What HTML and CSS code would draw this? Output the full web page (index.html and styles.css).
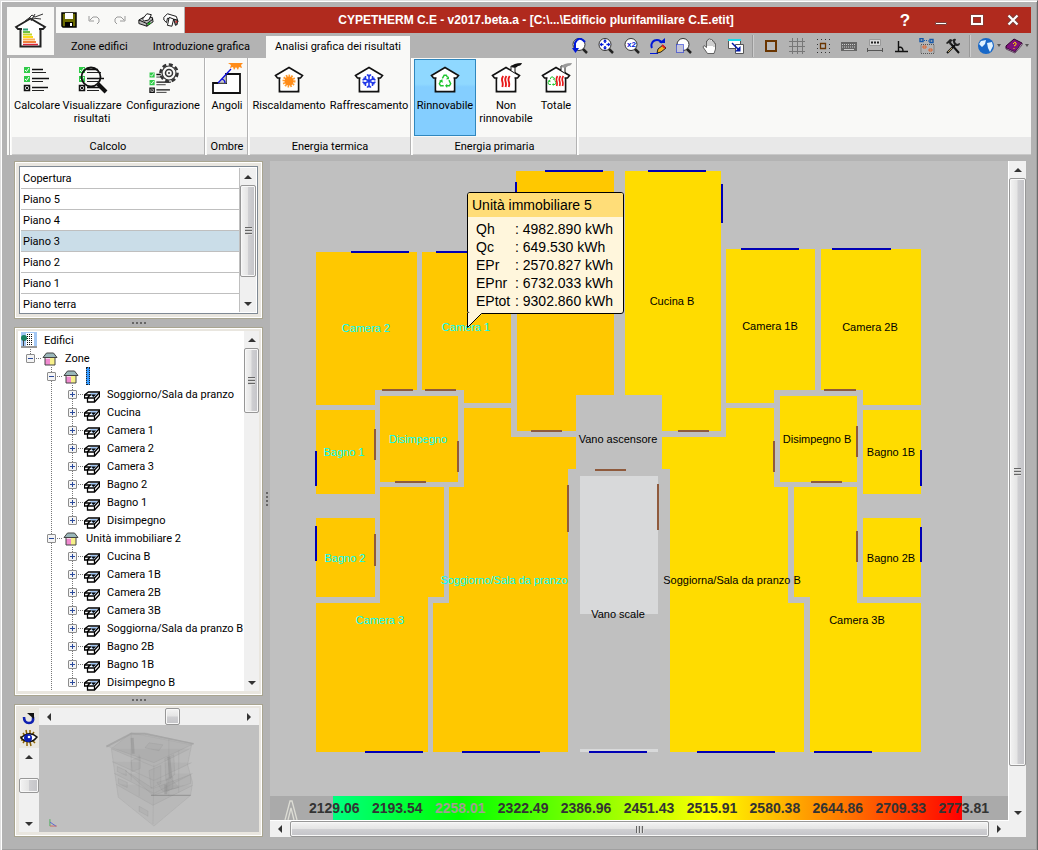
FILE: index.html
```
<!DOCTYPE html>
<html lang="it">
<head>
<meta charset="UTF-8">
<meta name="viewport" content="width=device-width, initial-scale=1.0">
<title>CYPETHERM C.E</title>
<link rel="stylesheet" href="styles.css">
</head>
<body>
<!-- shared icons -->
<svg class="defs" width="0" height="0" aria-hidden="true">
  <symbol id="i-zone" viewBox="0 0 16 16">
    <path d="M3 6h5v9H3z" fill="#f08ad0"/><path d="M3 6h5v3H3z" fill="#fbd3ec"/><path d="M8 6h5v9H8z" fill="#f7f08a"/>
    <path d="M3 15V7M13 15V7M3 15h10" stroke="#444" fill="none"/>
    <path d="M1 7.500 4.500 3h7L15 7.500z" fill="#9bb8ba" stroke="#444"/>
  </symbol>
  <symbol id="i-room" viewBox="0 0 16 12">
    <path d="M4.500 1h11v4.500l-5 5.500h-7V7h-3V4z" fill="#fff" stroke="#000" stroke-width="1.300"/>
    <path d="M6 2h8l-4 4H8z" fill="#a4c8f4"/>
    <path d="M7 3.500h5L9.500 6z" fill="#000"/>
    <path d="M1 4h6M3.500 7h7v4M10.500 7l5-5.500M3 7l4-3.500" stroke="#000" stroke-width="1.300" fill="none"/>
  </symbol>
  <symbol id="i-house" viewBox="0 0 32 32">
    <path d="M6.500 13v15.500h19V13" fill="#fff" stroke="#111" stroke-width="1.800"/>
    <path d="M2.500 12.500 16 4.500l13.500 8-2 2.500h-23z" fill="#fff" stroke="#111" stroke-width="1.600"/>
    <path d="M7.500 12.500h17v15h-17z" fill="#fff"/>
  </symbol>
  <symbol id="i-recycle" viewBox="0 0 16 16">
    <path d="M5 5l2-3.500h2.500L11 4M12.500 7l2 4-1.500 2.500H9.500M6.500 13.500H3L1.500 11 3.500 7.500" fill="none" stroke="#1fc52e" stroke-width="1.600"/>
    <path d="M12.500 2.500v3.500H9zM10.500 11v5L8 13.500zM1 8l4-2 .500 4z" fill="#1fc52e"/>
  </symbol>
  <symbol id="i-flames" viewBox="0 0 12 14">
    <path d="M3 1q-2 3-1 6t0 6M6.500 1q-2 3-1 6t0 6M10 1q-2 3-1 6t0 6" fill="none" stroke="#e81818" stroke-width="2"/>
  </symbol>
  <symbol id="i-list" viewBox="0 0 32 32">
    <path d="M3 4h6v6H3zM3 13h6v6H3z" fill="#2fcb48"/>
    <path d="M4 7l1.500 1.500L8 5M4 16l1.500 1.500L8 14" stroke="#fff" fill="none"/>
    <path d="M3.500 22.500h5v5h-5z" fill="#fff" stroke="#111" stroke-width="1.500"/>
    <path d="M4.500 23.500l3 3M7.500 23.500l-3 3" stroke="#111"/>
    <path d="M11 6.500h11M11 15.500h17M11 24.500h16" stroke="#111" stroke-width="1.600"/>
    <path d="M11 9.500h14M11 18.500h11M11 27.500h12" stroke="#222"/>
  </symbol>
  <symbol id="i-up" viewBox="0 0 8 8"><path d="M0 6 4 2l4 4z" fill="#333"/></symbol>
  <symbol id="i-down" viewBox="0 0 8 8"><path d="M0 2h8L4 6z" fill="#333"/></symbol>
  <symbol id="i-left" viewBox="0 0 8 8"><path d="M6 0v8L2 4z" fill="#333"/></symbol>
  <symbol id="i-right" viewBox="0 0 8 8"><path d="M2 0v8l4-4z" fill="#333"/></symbol>
  <symbol id="i-lens" viewBox="0 0 16 16">
    <path d="M10.500 10.500 15 15" stroke="#222" stroke-width="2.500"/>
    <circle cx="7" cy="6.500" r="6" fill="#fff" stroke="#333"/>
  </symbol>
</svg>

<div class="window">
  <header class="top">
    <button class="logo" aria-label="Menu">
      <svg width="34" height="36" viewBox="0 0 34 36">
        <path d="M6.500 15v18.500h20V15" fill="#fff" stroke="#222" stroke-width="2"/>
        <path d="M2 14 16.500 5.500 31 14l-2 2H4z" fill="#fff" stroke="#222" stroke-width="1.800"/>
        <path d="M8 14h17v18H8z" fill="#fff"/>
        <path d="M11 8l4-3 3-3 3 2 8-3M18 5l9 1M21 1l-4 7" stroke="#333" fill="none"/>
        <path d="M9 16.500h5" stroke="#2f9f7c" stroke-width="2"/><path d="M9 19h7" stroke="#6cc04a" stroke-width="2"/>
        <path d="M9 21.500h9" stroke="#c5d52b" stroke-width="2"/><path d="M9 24h10" stroke="#fbdc1a" stroke-width="2"/>
        <path d="M9 26.500h12" stroke="#f7b05a" stroke-width="2"/><path d="M9 29h13" stroke="#f0823c" stroke-width="2"/>
        <path d="M9 31.500h15" stroke="#d9263a" stroke-width="1.500"/>
      </svg>
    </button>
    <div class="top-rows">
      <div class="title-row">
        <div class="quick">
          <button aria-label="Salva"><svg width="16" height="16" viewBox="0 0 16 16"><path d="M1 1h14v14H2l-1-1z" fill="#6b6b00" stroke="#000" stroke-width="1.500"/><path d="M4 1h8v6H4z" fill="#fff"/><path d="M4 10h8v5H4z" fill="#000"/><path d="M9 11h2v3H9z" fill="#fff"/></svg></button>
          <button aria-label="Annulla"><svg width="14" height="12" viewBox="0 0 14 12"><path d="M3 6l3-3h4l2 2v3l-2 2M2 2v5h5" fill="none" stroke="#999"/></svg></button>
          <button aria-label="Ripeti"><svg width="14" height="12" viewBox="0 0 14 12"><path d="M11 6 8 3H4L2 5v3l2 2M12 2v5H7" fill="none" stroke="#999"/></svg></button>
          <button aria-label="Stampa"><svg width="16" height="16" viewBox="0 0 18 16"><path d="M1 8l5-3h10l1 5-7 5-9-3z" fill="#bbb" stroke="#000"/><path d="M5 7l5-6 5 1-3 6-5 1z" fill="#fff" stroke="#000"/><path d="M1 8l9 4v3M10 12l7-5" stroke="#000" fill="none"/><path d="M11 13l3-2" stroke="#1aa51a" stroke-width="2"/></svg></button>
          <button aria-label="Esporta"><svg width="16" height="16" viewBox="0 0 18 16"><path d="M1 5l4-4 10 3 2 6-2 1-2-3-8-2-1 5-3-3z" fill="#fff" stroke="#000"/><path d="M7 5l-2 9 5 1 2-8z" fill="#fff" stroke="#000"/><path d="M12 7l4 1v5l-2 1z" fill="#888" stroke="#000"/><path d="M14 10h2" stroke="#e03030" stroke-width="2"/></svg></button>
        </div>
        <h1>CYPETHERM C.E - v2017.beta.a - [C:\...\Edificio plurifamiliare C.E.etit]</h1>
        <div class="win-buttons">
          <button class="help" aria-label="Aiuto">?</button>
          <button aria-label="Riduci"><svg width="14" height="12"><path d="M1.500 8.500h11v2h-11z" fill="#fff" stroke="#7a3f3a"/></svg></button>
          <button aria-label="Ingrandisci"><svg width="14" height="12"><path d="M2 2h10v8H2z" fill="none" stroke="#7a3f3a" stroke-width="3.500"/><path d="M2 2h10v8H2z" fill="none" stroke="#fff" stroke-width="2"/></svg></button>
          <button aria-label="Chiudi"><svg width="14" height="12"><path d="M2.500 1.500l9 9M11.500 1.500l-9 9" stroke="#7a3f3a" stroke-width="4"/><path d="M2.500 1.500l9 9M11.500 1.500l-9 9" stroke="#fff" stroke-width="2.200"/></svg></button>
        </div>
      </div>
      <div class="tab-row">
        <nav class="tabs">
          <a href="#">Zone edifici</a>
          <a href="#">Introduzione grafica</a>
          <a href="#" class="active">Analisi grafica dei risultati</a>
        </nav>
        <div class="tools">
          <button aria-label="Vista precedente"><svg width="16" height="16"><use href="#i-lens"/><path d="M13 4Q7-3 3 5v6" fill="none" stroke="#0018d8" stroke-width="2"/><path d="M0 10h7l-3.500 5z" fill="#0018d8"/></svg></button>
          <button aria-label="Inquadra tutto"><svg width="16" height="16"><use href="#i-lens"/><path d="M7 2v3M7 8v3M2.500 6.500h3M8.500 6.500h3" stroke="#0018d8" stroke-width="1.500"/><path d="M7 1l2 2.500H5zM7 12l2-2.500H5zM1.500 6.500 4 4.500v4zM12.500 6.500 10 4.500v4z" fill="#0018d8"/></svg></button>
          <button aria-label="Zoom x2"><svg width="16" height="16"><use href="#i-lens"/><text x="3" y="9" class="x2">x2</text></svg></button>
          <button aria-label="Ridisegna"><svg width="16" height="16"><path d="M2 10a5.500 5.500 0 0 1 10-5" fill="none" stroke="#0018d8" stroke-width="2"/><path d="M9 5h6V0z" fill="#0018d8"/><path d="M0 15.500h8" stroke="#0018d8"/><path d="M7 15l1-4 5-4 3 3-5 4z" fill="#f5b41c" stroke="#222"/><path d="M12 7l3 3" stroke="#d22" stroke-width="2"/></svg></button>
          <button aria-label="Zoom finestra"><svg width="16" height="16"><use href="#i-lens"/><path d="M.500 6.500h7v8h-7z" fill="#c4c4d8" stroke="#0018d8" stroke-dasharray="1 1"/></svg></button>
          <button aria-label="Sposta"><svg width="16" height="16"><path d="M5.500 15.500 1 9l1-1.500 2.500 2V3L6 2.500V1.500L7.500 1 9 1.500l1.500.500v1L12 3.500V5l1.500.500V11L12 15.500z" fill="#fff" stroke="#444" stroke-width=".8"/><path d="M6 3v5M8 2v6M10 3v5M12 5v4" stroke="#777" stroke-width=".7"/></svg></button>
          <button aria-label="Finestre"><svg width="16" height="16"><path d="M.500 1.500h12v9H.500z" fill="#fff" stroke="#555"/><path d="M0 1h13v2H0z" fill="#15d8e8"/><path d="M7.500 6.500h8v9h-8z" fill="#fff" stroke="#555"/><path d="M4 5l7 7" stroke="#0018a8" stroke-width="1.500"/><path d="M12.500 8v5.500H7z" fill="#0018a8"/></svg></button>
          <span class="sep"></span>
          <button aria-label="Bordo"><svg width="16" height="16"><path d="M3 3h10v10H3z" fill="#b9b9b9" stroke="#6a3500" stroke-width="2"/></svg></button>
          <button aria-label="Griglia"><svg width="16" height="16"><path d="M3.500 0v16M8.500 0v16M13.500 0v16M0 3.500h16M0 8.500h16M0 13.500h16" stroke="#777"/></svg></button>
          <button aria-label="Punti"><svg width="16" height="16"><path d="M5.500 5.500h5v5h-5z" fill="none" stroke="#6a3500" stroke-width="1.300"/><path d="M2 1.500h13M2 14.500h13M2 6.500h1M2 10.500h1M14 6.500h1M14 10.500h1" stroke="#333" stroke-dasharray="1 3"/></svg></button>
          <button aria-label="Tastiera"><svg width="16" height="16"><path d="M0 4h16v9H0z" fill="#666"/><path d="M1 6.500h14M1 9h14" stroke="#ccc" stroke-dasharray="1 1"/><path d="M3 11.500h10" stroke="#ccc"/></svg></button>
          <button aria-label="Quote"><svg width="16" height="16"><path d="M2.500 1.500h11v6h-11z" fill="#ddd" stroke="#999"/><path d="M4 4.500h8" stroke="#222" stroke-width="2" stroke-dasharray="2 1"/><path d="M.500 10v4M15.500 10v4M1 12.500h14" stroke="#555" fill="none"/></svg></button>
          <button aria-label="Ortogonale"><svg width="16" height="16"><path d="M5.500 3v10M2 13.500h13M6 9q4 0 4 4" stroke="#111" stroke-width="1.400" fill="none"/></svg></button>
          <button aria-label="Catture"><svg width="16" height="16"><path d="M1 .500h3v3H1zM11 1.500h3v3h-3z" fill="none" stroke="#1557a8" stroke-width="1.400"/><path d="M5 2.500h1M7 2.500h1M9 3h1" stroke="#1557a8"/><path d="M2 6.500h13v9H2z" fill="none" stroke="#555" stroke-dasharray="1 1"/><path d="M4 8h3v2H4zM10 11h3v2h-3z" fill="none" stroke="#e0642c"/></svg></button>
          <button aria-label="Configurazione"><svg width="16" height="16"><path d="M2 15 10 7M6 6l8 9" stroke="#111" stroke-width="2"/><path d="M1 5l4-4 3 1-2 2 1 2-2 1-1-2-2 1zM11 1l-1 3 2 2 3-1q0 3-3 3T8 4t3-3z" fill="#222"/><path d="M7 10l-4 4" stroke="#b9a060"/></svg></button>
          <span class="sep"></span>
          <button class="drop" aria-label="Lingua"><svg width="18" height="16"><circle cx="9" cy="8" r="8" fill="#1868c8"/><path d="M4 3l5-1-1 4-3 3-3-3zM10 5l5-1 1 4-3 6-2-4z" fill="#dff2ff"/></svg><i></i></button>
          <button class="drop" aria-label="Guida"><svg width="18" height="16"><path d="M1 8l8-7 8 4-7 9-9-4z" fill="#80107c" stroke="#300030"/><path d="M1 10l9 4 7-9v2l-7 8-9-4z" fill="#fff" stroke="#300030" stroke-width=".7"/><path d="M8 6q2-3 3-1t-2 3M9 10v1" stroke="#ffe000" fill="none"/></svg><i></i></button>
        </div>
      </div>
    </div>
  </header>

  <section class="ribbon">
    <div class="group">
      <div class="cmds">
        <button class="w-50"><svg width="32" height="32"><use href="#i-list"/></svg>Calcolare</button>
        <button class="w-60"><svg width="32" height="32"><use href="#i-list"/><circle cx="15" cy="14" r="9.500" fill="none" stroke="#111" stroke-width="1.800"/><path d="M22 21l8 8" stroke="#111" stroke-width="4"/></svg>Visualizzare risultati</button>
        <button class="w-82"><svg width="32" height="32"><g transform="translate(0 6) scale(.85)"><use href="#i-list" width="32" height="32"/></g><circle cx="22" cy="10" r="8.500" fill="#f9f9f7" stroke="#333" stroke-width="2.500" stroke-dasharray="4 2.600"/><circle cx="22" cy="10" r="7" fill="#f9f9f7" stroke="#333" stroke-width="1.200"/><circle cx="22" cy="10" r="3.500" fill="none" stroke="#333" stroke-width="1.500"/><circle cx="22" cy="10" r="1" fill="#333"/></svg>Configurazione</button>
      </div>
      <h2>Calcolo</h2>
    </div>
    <div class="group">
      <div class="cmds">
        <button class="w-40"><svg width="32" height="32"><path d="M2 20h13v-9h14v19H2z" fill="#fff" stroke="#111" stroke-width="1.800"/><path d="M15 12v8H7z" fill="#ccc" stroke="#888"/><path d="M7 20 20 6M11 16q3 1 3 4" stroke="#1010e0" stroke-width="1.300" fill="none"/><path d="M17 0l3 2-1 3 3-1 1 3 2-3 2 3 1-3 3 1-1-3 2-2z" fill="#ff8c1a"/></svg>Angoli</button>
      </div>
      <h2>Ombre</h2>
    </div>
    <div class="group">
      <div class="cmds">
        <button class="w-78"><svg width="32" height="32"><use href="#i-house"/><circle cx="16" cy="18" r="5" fill="none" stroke="#ff9b2e" stroke-width="3" stroke-dasharray="1.500 1"/><circle cx="16" cy="18" r="4.500" fill="#ff8c1a"/></svg>Riscaldamento</button>
        <button class="w-82"><svg width="32" height="32"><use href="#i-house"/><path d="M16 11.500v13M10.500 15l11 6M10.500 21l11-6M14 11.500l2 2 2-2M14 24.500l2-2 2 2M9.500 17l3-1v-3M22.500 17l-3-1v-3M9.500 19l3 1v3M22.500 19l-3 1v3" stroke="#2038e8" stroke-width="1.500" fill="none"/></svg>Raffrescamento</button>
      </div>
      <h2>Energia termica</h2>
    </div>
    <div class="group primary">
      <div class="cmds">
        <button class="w-62 selected"><svg width="32" height="32"><use href="#i-house"/><use href="#i-recycle" x="9" y="11" width="14" height="14"/></svg>Rinnovabile</button>
        <button class="w-60"><svg width="32" height="32"><use href="#i-house"/><path d="M21 7V3h4v7" fill="#fff" stroke="#111"/><path d="M21 4q2-4 11-4-1 3-4 3-2 3-7 1z" fill="#111"/><use href="#i-flames" x="10" y="12" width="12" height="13"/></svg>Non rinnovabile</button>
        <button class="w-40"><svg width="32" height="32"><use href="#i-house"/><path d="M21 7V3h4v7" fill="#fff" stroke="#111"/><path d="M21 4q2-4 11-4-1 3-4 3-2 3-7 1z" fill="#999"/><use href="#i-recycle" x="7" y="12" width="10" height="12"/><use href="#i-flames" x="15" y="12" width="10" height="12"/></svg>Totale</button>
      </div>
      <h2>Energia primaria</h2>
    </div>
    <div class="group rest"><div class="cmds"></div><h2></h2></div>
  </section>

  <main class="work">
    <aside class="side">
      <section class="panel floors">
        <div class="floor-box">
          <ul class="floor-list">
            <li><button>Copertura</button></li>
            <li><button>Piano 5</button></li>
            <li><button>Piano 4</button></li>
            <li><button class="current">Piano 3</button></li>
            <li><button>Piano 2</button></li>
            <li><button>Piano 1</button></li>
            <li><button>Piano terra</button></li>
          </ul>
          <div class="scroll v">
            <button aria-label="Su"><svg width="8" height="8"><use href="#i-up"/></svg></button>
            <div class="track"><div class="thumb floors-thumb"><span class="grip"></span></div></div>
            <button aria-label="Giù"><svg width="8" height="8"><use href="#i-down"/></svg></button>
          </div>
        </div>
      </section>
      <div class="dots"></div>

      <section class="panel tree-panel">
        <div class="tree">
          <div class="row root"><svg width="16" height="16"><path d="M0 0h16v14H0z" fill="#a4c8f4"/><path d="M5 1h8v13H5z" fill="#fff"/><path d="M6.500 2v11M8.500 2v11M10.500 2v11" stroke="#111" stroke-dasharray="1 1"/><circle cx="3" cy="6" r="3" fill="#168060"/><path d="M2.500 8v6" stroke="#444"/><path d="M0 14h16v2H0z" fill="#999"/></svg>Edifici</div>
          <ul class="first">
            <li>
              <div class="row"><button class="exp open" aria-label="Comprimi"></button><i class="lead"></i><svg width="16" height="16"><use href="#i-zone"/></svg>Zone</div>
              <ul>
                <li>
                  <div class="row"><button class="exp open" aria-label="Comprimi"></button><i class="lead"></i><svg width="16" height="16"><use href="#i-zone"/></svg><span class="picked"></span></div>
                  <ul>
                    <li class="row"><button class="exp" aria-label="Espandi"></button><i class="lead"></i><svg width="16" height="12"><use href="#i-room"/></svg>Soggiorno/Sala da pranzo</li>
                    <li class="row"><button class="exp" aria-label="Espandi"></button><i class="lead"></i><svg width="16" height="12"><use href="#i-room"/></svg>Cucina</li>
                    <li class="row"><button class="exp" aria-label="Espandi"></button><i class="lead"></i><svg width="16" height="12"><use href="#i-room"/></svg>Camera 1</li>
                    <li class="row"><button class="exp" aria-label="Espandi"></button><i class="lead"></i><svg width="16" height="12"><use href="#i-room"/></svg>Camera 2</li>
                    <li class="row"><button class="exp" aria-label="Espandi"></button><i class="lead"></i><svg width="16" height="12"><use href="#i-room"/></svg>Camera 3</li>
                    <li class="row"><button class="exp" aria-label="Espandi"></button><i class="lead"></i><svg width="16" height="12"><use href="#i-room"/></svg>Bagno 2</li>
                    <li class="row"><button class="exp" aria-label="Espandi"></button><i class="lead"></i><svg width="16" height="12"><use href="#i-room"/></svg>Bagno 1</li>
                    <li class="row"><button class="exp" aria-label="Espandi"></button><i class="lead"></i><svg width="16" height="12"><use href="#i-room"/></svg>Disimpegno</li>
                  </ul>
                </li>
                <li>
                  <div class="row"><button class="exp open" aria-label="Comprimi"></button><i class="lead"></i><svg width="16" height="16"><use href="#i-zone"/></svg>Unità immobiliare 2</div>
                  <ul>
                    <li class="row"><button class="exp" aria-label="Espandi"></button><i class="lead"></i><svg width="16" height="12"><use href="#i-room"/></svg>Cucina B</li>
                    <li class="row"><button class="exp" aria-label="Espandi"></button><i class="lead"></i><svg width="16" height="12"><use href="#i-room"/></svg>Camera 1B</li>
                    <li class="row"><button class="exp" aria-label="Espandi"></button><i class="lead"></i><svg width="16" height="12"><use href="#i-room"/></svg>Camera 2B</li>
                    <li class="row"><button class="exp" aria-label="Espandi"></button><i class="lead"></i><svg width="16" height="12"><use href="#i-room"/></svg>Camera 3B</li>
                    <li class="row"><button class="exp" aria-label="Espandi"></button><i class="lead"></i><svg width="16" height="12"><use href="#i-room"/></svg>Soggiorna/Sala da pranzo B</li>
                    <li class="row"><button class="exp" aria-label="Espandi"></button><i class="lead"></i><svg width="16" height="12"><use href="#i-room"/></svg>Bagno 2B</li>
                    <li class="row"><button class="exp" aria-label="Espandi"></button><i class="lead"></i><svg width="16" height="12"><use href="#i-room"/></svg>Bagno 1B</li>
                    <li class="row"><button class="exp" aria-label="Espandi"></button><i class="lead"></i><svg width="16" height="12"><use href="#i-room"/></svg>Disimpegno B</li>
                  </ul>
                </li>
              </ul>
            </li>
          </ul>
        </div>
        <div class="scroll v">
          <button aria-label="Su"><svg width="8" height="8"><use href="#i-up"/></svg></button>
          <div class="track"><div class="thumb tree-thumb"><span class="grip"></span></div></div>
          <button aria-label="Giù"><svg width="8" height="8"><use href="#i-down"/></svg></button>
        </div>
      </section>
      <div class="dots"></div>

      <section class="panel preview">
        <div class="preview-left">
          <button aria-label="Ripristina vista"><svg width="14" height="14"><path d="M2 6q0 6 5 6t4-6" fill="none" stroke="#1020b0" stroke-width="2.600"/><path d="M5 2h7v6z" fill="#111"/></svg></button>
          <button aria-label="Visibilità"><svg width="18" height="18"><path d="M3 4l2 3M6 1l1 5M10 1v5M14 3l-2 3M3 14l2-3M7 17v-4M11 17l-1-4M15 14l-3-3M0 8h4M1 11h3" stroke="#8a6000" stroke-width="1.500"/><path d="M1 9q8-8 16-1-7 9-16 1z" fill="#fff" stroke="#111" stroke-width="1.500"/><circle cx="8" cy="9" r="4" fill="#0a1eb4"/><circle cx="9" cy="8" r="1.300" fill="#fff"/></svg></button>
          <div class="scroll v">
            <button aria-label="Su"><svg width="8" height="8"><use href="#i-up"/></svg></button>
            <div class="track"><div class="thumb spin-v"></div></div>
            <button aria-label="Giù"><svg width="8" height="8"><use href="#i-down"/></svg></button>
          </div>
        </div>
        <div class="preview-main">
          <div class="scroll h">
            <button aria-label="Sinistra"><svg width="8" height="8"><use href="#i-left"/></svg></button>
            <div class="track"><div class="thumb spin-h"></div></div>
            <button aria-label="Destra"><svg width="8" height="8"><use href="#i-right"/></svg></button>
          </div>
          <svg class="model" viewBox="0 0 220 108">
            <g fill="#888" fill-opacity=".12" stroke="#888" stroke-opacity=".3" stroke-width=".6">
              <path d="M72 24 92 8l61 12-4 20 5 18-2 13-37 31-36-29z"/>
              <path d="M67 21 92 8h14l49 11-40 19z"/>
              <path d="M72 24l43 18 36-18M73 37l42 19 38-18M75 49l40 20 39-20M77 60l37 21 40-20M115 40l-1 60M92 8v48M100 30v42M130 14v58M140 26v42"/>
              <path d="M86 46l28 25 38-12v-9l-38 14z"/>
              <path d="M126 34l9-4 1 20-9 6zM92 36l9-4v12l-8 3zM110 46l12-5v18l-10 5zM128 54l6-2v12l-6 3z"/>
              <path d="M78 42l9 4v5l-9-4zM79 54l9 4v5l-9-4zM100 82l9 5v5l-9-5zM110 18l14 2-4 6-14-3zM118 58l14-4 8 9-16 4z"/>
            </g>
            <path d="M67 22 92 9h14l49 10" fill="none" stroke="#a0a0a0" stroke-width="1.600" opacity=".7"/>
            <path d="M112 71h40" stroke="#777" opacity=".6"/>
            <path d="M93 13l1 16M130 32l2 22M127 60v10" stroke="#888" stroke-width="3" opacity=".4"/>
            <path d="M10 102v-7" stroke="#4fae5c"/><path d="M10 102h7" stroke="#d06a60"/><path d="M10 98l6 4" stroke="#5a6ad0"/>
          </svg>
        </div>
      </section>
    </aside>

    <div class="side-split"><div class="dots"></div></div>

    <section class="view">
      <div class="view-main">
        <div class="canvas">
          <svg class="plan" viewBox="270 161 738 620">
            <g class="unit-a">
              <path d="M316 252H417V390H375V405H316z"/>
              <path d="M422 252H511V403H464V390H422z"/>
              <path d="M516 171H614V395H576V431H517V300H516z"/>
              <path d="M316 410h59v84h-59z"/>
              <path d="M380 396h78v86h-78z"/>
              <path d="M316 518h59v79h-59z"/>
              <path d="M464 408H511V437H576V469H568V752H433V603H449V487H464z"/>
              <path d="M380 487H444V597H428V752H316V603H380z"/>
            </g>
            <g class="unit-b">
              <path d="M625 171H721V431H662V395H625z"/>
              <path d="M726 249H815V390H774V403H726z"/>
              <path d="M821 249H921V405H863V390H821z"/>
              <path d="M780 396h77v86h-77z"/>
              <path d="M863 410h58v84h-58z"/>
              <path d="M863 518h58v79h-58z"/>
              <path d="M726 408H774V487H788V603H804V752H670V469H662V437H726z"/>
              <path d="M794 487H857V603H921V752H810V597H794z"/>
            </g>
            <path class="stairs" d="M580 476h78v138h-78zM580 749h78v3h-78z"/>
            <path class="windows" d="M351 252h58M436 252h58M545 171h58M516 182v40M648 171h58M722 184v39M741 249h58M832 249h59M316 451v35M316 526v35M921 450v36M921 527v35M365 752h58M462 752h78M589 752h58M697 752h78M814 752h58"/>
            <path class="doors" d="M382 390h31M425 390h31M824 390h32M375 429v31M458 441v31M395 482h31M531 431h31M678 431h31M595 470h31M568 485v47M658 484v46M774 441v31M857 426v31M811 482h31M375 534v32M857 531v31"/>
            <g class="names picked-unit">
              <text x="366" y="332">Camera 2</text>
              <text x="466" y="331">Camera 1</text>
              <text x="418" y="443">Disimpegno</text>
              <text x="344" y="456">Bagno 1</text>
              <text x="345" y="562">Bagno 2</text>
              <text x="504" y="584">Soggiorno/Sala da pranzo</text>
              <text x="380" y="624">Camera 3</text>
            </g>
            <g class="names">
              <text x="672" y="305">Cucina B</text>
              <text x="770" y="330">Camera 1B</text>
              <text x="870" y="331">Camera 2B</text>
              <text x="618" y="443">Vano ascensore</text>
              <text x="817" y="443">Disimpegno B</text>
              <text x="891" y="456">Bagno 1B</text>
              <text x="891" y="562">Bagno 2B</text>
              <text x="732" y="584">Soggiorna/Sala da pranzo B</text>
              <text x="618" y="618">Vano scale</text>
              <text x="857" y="624">Camera 3B</text>
            </g>
          </svg>
          <div class="tip">
            <h3>Unità immobiliare 5</h3>
            <dl>
              <dt>Qh</dt><dd>: 4982.890 kWh</dd>
              <dt>Qc</dt><dd>: 649.530 kWh</dd>
              <dt>EPr</dt><dd>: 2570.827 kWh</dd>
              <dt>EPnr</dt><dd>: 6732.033 kWh</dd>
              <dt>EPtot</dt><dd>: 9302.860 kWh</dd>
            </dl>
            <svg class="tail" width="16" height="16"><path d="M.500 0v14.500L14.500 1V0z" fill="#fff6dc"/><path d="M.500 0v14.500L14.500.500" fill="none" stroke="#000"/></svg>
          </div>
        </div>
        <div class="legend">
          <svg class="north" width="14" height="20"><path d="M1 20 6 1h2l5 19M4 20 7 8l3 12" fill="none" stroke="#ddddd5" stroke-width="1.300"/></svg>
          <ol>
            <li>2129.06</li><li>2193.54</li><li class="dim">2258.01</li><li>2322.49</li><li>2386.96</li><li>2451.43</li><li>2515.91</li><li>2580.38</li><li>2644.86</li><li>2709.33</li><li>2773.81</li>
          </ol>
        </div>
      </div>
      <div class="scroll v">
        <button aria-label="Su"><svg width="8" height="8"><use href="#i-up"/></svg></button>
        <div class="track"><div class="thumb view-thumb"><span class="grip"></span></div></div>
        <button aria-label="Giù"><svg width="8" height="8"><use href="#i-down"/></svg></button>
      </div>
      <div class="scroll h">
        <button aria-label="Sinistra"><svg width="8" height="8"><use href="#i-left"/></svg></button>
        <div class="track"><div class="thumb view-thumb-h"><span class="grip"></span></div></div>
        <button aria-label="Destra"><svg width="8" height="8"><use href="#i-right"/></svg></button>
      </div>
      <div class="corner"></div>
    </section>
  </main>
</div>
</body>
</html>
```
FILE: styles.css
```
* {
  box-sizing: border-box;
}
body {
  margin: 0;
  background: #b3b3b3;
  font-family: Roboto, "Liberation Sans", Arial, sans-serif;
  font-size: 11px;
  line-height: 13px;
  color: #000;
}
ul, ol, dl, dd, h1, h2, h3 {
  margin: 0;
  padding: 0;
  list-style: none;
  font-size: inherit;
  font-weight: normal;
}
button {
  margin: 0;
  padding: 0;
  border: 0;
  background: none;
  font: inherit;
  color: inherit;
}
svg {
  display: block;
  flex: none;
}
.defs {
  position: absolute;
}
.window {
  display: flex;
  flex-direction: column;
  min-height: 100vh;
  padding: 6px;
  border: 1px solid;
  border-color: #e0e0e0 #696969 #696969 #e0e0e0;
  box-shadow: inset 1px 1px 0 #fff, inset -1px -1px 0 #a0a0a0;
}

/* title bar and tabs */
.top {
  display: flex;
  gap: 2px;
}
.logo {
  display: flex;
  justify-content: center;
  align-items: center;
  width: 47px;
  height: 48px;
  background: #f9f9f7;
}
.top-rows {
  flex: 1;
  min-width: 0;
}
.title-row {
  display: flex;
  height: 26px;
  background: #b02a1e;
}
.quick {
  display: flex;
  width: 129px;
  background: #f9f9f7;
  border-right: 1px solid #b3b3b3;
}
.quick button {
  display: flex;
  justify-content: center;
  align-items: center;
  width: 26px;
}
.title-row h1 {
  flex: 1;
  min-width: 0;
  overflow: hidden;
  white-space: nowrap;
  text-align: center;
  font-family: "Liberation Sans", Arial, sans-serif;
  font-size: 12px;
  font-weight: bold;
  line-height: 27px;
  color: #fff;
}
.win-buttons {
  display: flex;
}
.win-buttons button {
  display: flex;
  justify-content: center;
  align-items: center;
  width: 36px;
  color: #fff;
}
.win-buttons .help {
  font-family: "Liberation Sans", Arial, sans-serif;
  font-size: 17px;
  font-weight: bold;
}
.tab-row {
  display: flex;
  justify-content: space-between;
  height: 25px;
}
.tabs {
  display: flex;
  align-items: flex-end;
  gap: 7px;
  padding-left: 6px;
}
.tabs a {
  height: 22px;
  padding: 0 9px;
  line-height: 21px;
  white-space: nowrap;
  color: #000;
  text-decoration: none;
}
.tabs .active {
  background: #f9f9f7;
}
.tools {
  display: flex;
  align-items: center;
}
.tools button {
  display: flex;
  justify-content: center;
  align-items: center;
  width: 26px;
  height: 20px;
}
.tools .sep {
  width: 2px;
  height: 22px;
  margin: 0 4px 0 3px;
  background: #999;
  border-right: 1px solid #ccc;
}
.tools .drop {
  justify-content: flex-start;
  gap: 2px;
  width: 28px;
  padding-left: 2px;
}
.drop i {
  border: 2px solid transparent;
  border-top: 3px solid #555;
  border-bottom: 0;
}
.x2 {
  font: bold 8px "Liberation Sans", Arial, sans-serif;
  fill: #0018d8;
}

/* ribbon */
.ribbon {
  display: flex;
  padding-left: 2px;
  background: #f9f9f7;
}
.group {
  display: flex;
  flex-direction: column;
  border-left: 1px solid #b3b3b3;
  box-shadow: inset 1px 0 0 #fff;
}
.cmds {
  display: flex;
  height: 79px;
  padding: 1px 0 1px 2px;
}
.primary .cmds {
  padding-left: 3px;
}
.cmds button {
  display: flex;
  flex-direction: column;
  align-items: center;
  padding-top: 3px;
  border: 1px solid transparent;
}
.cmds svg {
  margin-bottom: 4px;
}
.cmds .selected {
  border-color: #3087be;
  background: linear-gradient(#8fd8ff 0, #8fd8ff 32%, #84ceff 36%, #84ceff 100%);
}
.group h2 {
  height: 18px;
  margin-left: 2px;
  line-height: 19px;
  text-align: center;
  background: #e8e8e8;
  border-bottom: 1px solid #c8c8c8;
}
.group.rest {
  flex: 1;
}
.w-40 { width: 40px; }
.w-50 { width: 50px; }
.w-60 { width: 60px; }
.w-62 { width: 62px; }
.w-78 { width: 78px; }
.w-82 { width: 82px; }

/* work area */
.work {
  display: flex;
  flex: 1;
  min-height: 0;
  padding: 6px 5px 7px 7px;
}
.side {
  display: flex;
  flex-direction: column;
  width: 249px;
}
.panel {
  padding: 2px;
  border: 1px solid #a9a590;
  box-shadow: inset 0 0 0 1px #fff;
  background: #e9e6df;
}
.dots {
  width: 16px;
  height: 8px;
  margin: 0 auto;
  background: linear-gradient(#666, #666) 1px 3px / 2px 2px no-repeat,
    linear-gradient(#666, #666) 5px 3px / 2px 2px no-repeat,
    linear-gradient(#666, #666) 9px 3px / 2px 2px no-repeat,
    linear-gradient(#666, #666) 13px 3px / 2px 2px no-repeat;
}
.side-split {
  display: flex;
  align-items: center;
  width: 7px;
}
.side-split .dots {
  width: 7px;
  height: 16px;
  background: linear-gradient(#666, #666) 3px 1px / 2px 2px no-repeat,
    linear-gradient(#666, #666) 3px 5px / 2px 2px no-repeat,
    linear-gradient(#666, #666) 3px 9px / 2px 2px no-repeat,
    linear-gradient(#666, #666) 3px 13px / 2px 2px no-repeat;
}
.floors {
  padding: 4px;
}
.floor-box {
  display: flex;
  height: 148px;
  padding: 1px;
  border: 1px solid #7f8994;
  background: #fff;
}
.floor-list {
  flex: 1;
  overflow: hidden;
  border-right: 1px solid #bfbfbf;
}
.floor-list li {
  border-bottom: 1px solid #bfbfbf;
}
.floor-list button {
  display: block;
  width: 100%;
  height: 20px;
  padding: 1px 2px 0;
  text-align: left;
}
.floor-list .current {
  background: #cadde8;
}

/* scroll bars */
.scroll {
  display: flex;
  background: #f0f0f0;
}
.scroll.v {
  flex-direction: column;
  width: 16px;
}
.scroll button {
  display: flex;
  justify-content: center;
  align-items: center;
  width: 20px;
}
.scroll.v button {
  width: 100%;
  height: 17px;
}
.track {
  flex: 1;
  min-height: 0;
}
.thumb {
  display: flex;
  justify-content: center;
  align-items: center;
  border: 1px solid #979797;
  border-radius: 2px;
  box-shadow: inset 0 0 0 1px #f8f8f8;
}
.v .thumb {
  background: linear-gradient(90deg, #f3f3f3, #e4e4e4 48%, #cfcfd2 52%, #c4c4c8);
}
.h .thumb {
  height: 100%;
  background: linear-gradient(#f3f3f3, #e4e4e4 48%, #cfcfd2 52%, #c4c4c8);
}
.v .grip {
  width: 7px;
  height: 8px;
  background: repeating-linear-gradient(#666 0, #666 1px, #eee 1px, #bbb 3px);
}
.h .grip {
  width: 8px;
  height: 7px;
  background: repeating-linear-gradient(90deg, #666 0, #666 1px, #eee 1px, #bbb 3px);
}
.floors-thumb { height: 84%; }
.tree-thumb { height: 20%; }
.view-thumb { height: 94%; }
.view-thumb-h { width: 100%; }

/* tree */
.tree-panel {
  display: flex;
  flex: 1;
  padding: 3px 3px 4px 3px;
  min-height: 0;
}
.tree-panel .scroll {
  width: 15px;
}
.tree {
  flex: 1;
  min-width: 0;
  overflow: hidden;
  background: #fff;
}
.row {
  display: flex;
  align-items: center;
  height: 18px;
  white-space: nowrap;
}
.row svg {
  margin-right: 7px;
}
li.row svg {
  margin-top: 5px;
}
.row.root {
  padding-left: 3px;
}
.tree ul {
  margin-left: 21px;
  background: repeating-linear-gradient(#777 0, #777 1px, transparent 1px, transparent 2px) 4px 0 / 1px calc(100% - 9px) no-repeat;
}
.tree ul.first {
  margin-left: 8px;
  background-size: 1px 9px;
}
.tree ul.first > li > ul {
  background-size: 1px 100%;
}
.exp {
  flex: none;
  width: 9px;
  height: 9px;
  margin-right: 1px;
  border: 1px solid #8d8d8d;
  border-radius: 1px;
  background:
    linear-gradient(#2a4a9c, #2a4a9c) center / 5px 1px no-repeat,
    linear-gradient(#2a4a9c, #2a4a9c) center / 1px 5px no-repeat,
    #f4f4f4;
}
.exp.open {
  background:
    linear-gradient(#2a4a9c, #2a4a9c) center / 5px 1px no-repeat,
    #f4f4f4;
}
.lead {
  flex: none;
  width: 6px;
  height: 1px;
  background: repeating-linear-gradient(90deg, #777 0, #777 1px, transparent 1px, transparent 2px);
}
.picked {
  width: 4px;
  height: 18px;
  background: #3399ff;
  border: 1px dotted #222;
}

/* model preview */
.preview {
  display: flex;
  height: 133px;
  padding: 3px 3px 4px;
}
.preview-left {
  display: flex;
  flex-direction: column;
  align-items: center;
  width: 21px;
}
.preview-left > button {
  height: 20px;
}
.preview-left .scroll {
  flex: 1;
  width: 20px;
}
.preview-main {
  display: flex;
  flex: 1;
  flex-direction: column;
}
.preview-main .scroll {
  height: 17px;
}
.model {
  flex: 1;
  width: 100%;
  min-height: 0;
  background: #c0c0c0;
}
.spin-h {
  width: 15px;
  margin-left: 59%;
}
.spin-v {
  height: 15px;
  margin-top: 13px;
}

/* floor plan */
.view {
  display: grid;
  grid-template-columns: 1fr 17px;
  grid-template-rows: 1fr 16px;
  flex: 1;
  min-width: 0;
  background: #f0f0f0;
}
.view-main {
  display: flex;
  flex-direction: column;
  border-right: 1px solid #fff;
  border-bottom: 1px solid #fff;
}
.view > .scroll.v {
  width: 17px;
}
.canvas {
  position: relative;
  flex: 1;
  background: #c0c0c0;
}
.plan {
  width: 100%;
}
.unit-a { fill: #ffc800; }
.unit-b { fill: #ffdc00; }
.stairs { fill: #d8d9da; }
.windows {
  stroke: #0000b4;
  stroke-width: 2px;
}
.doors {
  stroke: #8f5a3c;
  stroke-width: 2px;
}
.names {
  font-family: "Liberation Sans", Arial, sans-serif;
  font-size: 11px;
  text-anchor: middle;
}
.picked-unit {
  fill: #00ffff;
}
.tip {
  position: absolute;
  left: 197px;
  top: 31px;
  width: 157px;
  border: 1px solid #000;
  border-radius: 3px;
  background: #fff6dc;
  font-family: "Liberation Sans", Arial, sans-serif;
  font-size: 14px;
  line-height: 18px;
}
.tip h3 {
  padding: 3px 4px;
  border-radius: 2px 2px 0 0;
  background: #ffdd78;
}
.tip dl {
  display: grid;
  grid-template-columns: 39px 1fr;
  padding: 3px 8px;
  white-space: nowrap;
}
.tail {
  position: absolute;
  left: -1px;
  top: 100%;
}
.legend {
  display: flex;
  align-items: center;
  height: 24px;
  background: linear-gradient(90deg, #00ff80, #00ff00 20%, #ffff00 60%, #ff0000) 63px 0 / calc(100% - 109px) 100% no-repeat #aaa;
}
.north {
  align-self: flex-end;
  margin-left: 14px;
}
.legend ol {
  display: flex;
  justify-content: space-between;
  flex: 1;
  padding: 0 19px 0 11px;
  font-family: "Liberation Sans", Arial, sans-serif;
  font-size: 14px;
  font-weight: bold;
  color: #333;
}
.legend .dim {
  color: #a0a090;
}
.corner {
  background: #f0f0f0;
}
```
